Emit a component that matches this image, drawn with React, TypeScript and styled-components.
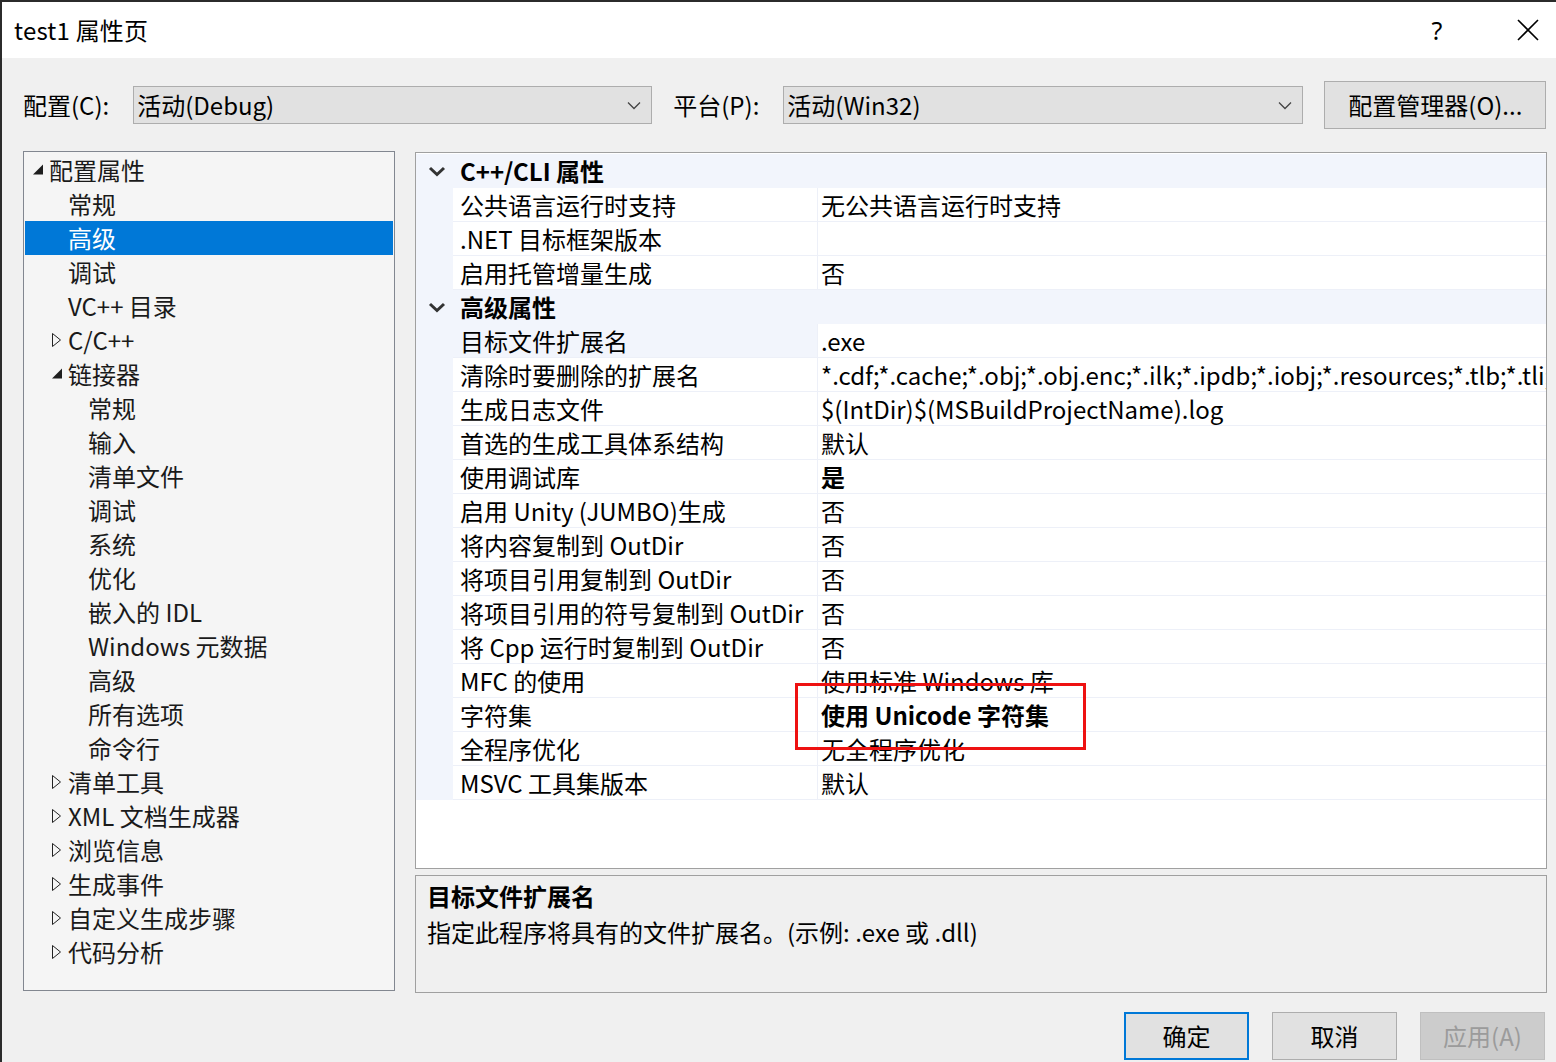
import React from 'react';
import styled, { createGlobalStyle } from 'styled-components';

const GlobalStyle = createGlobalStyle`
  html, body {
    margin: 0;
    padding: 0;
    background: #f0f0f0;
  }
  body {
    font-family: "Noto Sans CJK SC", "Noto Sans", sans-serif;
    color: #000;
  }
  * { box-sizing: border-box; }
`;

const Window = styled.div`
  width: 1556px;
  height: 1062px;
  border-top: 2px solid #2b2b2b;
  border-left: 2px solid #2b2b2b;
  background: #f0f0f0;
  overflow: hidden;
  display: flex;
  flex-direction: column;
  font-size: 24px;
`;

const TitleBar = styled.div`
  height: 56px;
  background: #fff;
  display: flex;
  align-items: center;
  padding-left: 12px;
  padding-right: 5px;
`;

const TitleText = styled.div`
  flex: 1;
  font-size: 24px;
  line-height: 56px;
  letter-spacing: 0.2px;
`;

const TitleButtons = styled.div`
  display: flex;
  gap: 45px;
`;

const TitleButton = styled.div`
  width: 46px;
  height: 56px;
  display: flex;
  align-items: center;
  justify-content: center;
  font-family: "Noto Sans", sans-serif;
  font-size: 25px;
`;

const ConfigRow = styled.div`
  margin-top: 23px;
  height: 48px;
  display: flex;
  align-items: center;
  padding-left: 21px;
`;

const Label = styled.span`
  margin-right: 24px;
  line-height: 34px;
`;

const Combo = styled.div<{ $width: number }>`
  width: ${(p) => p.$width}px;
  height: 38px;
  margin-right: 21px;
  border: 1px solid #adadad;
  background: #e1e1e1;
  display: flex;
  align-items: center;
  padding-left: 3px;
  padding-right: 10px;
`;

const ComboText = styled.span`
  flex: 1;
  line-height: 34px;
`;

const Button = styled.div<{ $primary?: boolean; $disabled?: boolean; $width?: number }>`
  width: ${(p) => p.$width ?? 125}px;
  height: 48px;
  display: flex;
  align-items: center;
  justify-content: center;
  background: ${(p) => (p.$disabled ? '#cccccc' : '#e1e1e1')};
  color: ${(p) => (p.$disabled ? '#9b9b9b' : '#000')};
  border: ${(p) => (p.$primary ? '2px solid #0078d7' : p.$disabled ? '1px solid #bfbfbf' : '1px solid #adadad')};
  line-height: 34px;
`;

const Main = styled.div`
  margin-top: 22px;
  height: 842px;
  display: flex;
  gap: 20px;
  padding-left: 21px;
  padding-right: 9px;
`;

const Tree = styled.div`
  width: 372px;
  height: 840px;
  border: 1px solid #828790;
  background: #f5f5f5;
  padding-top: 1px;
  padding-left: 1px;
  padding-right: 1px;
`;

const TreeRow = styled.div<{ $indent: number; $selected?: boolean }>`
  height: 34px;
  display: flex;
  align-items: center;
  padding-left: ${(p) => p.$indent}px;
  background: ${(p) => (p.$selected ? '#0078d7' : 'transparent')};
  color: ${(p) => (p.$selected ? '#fff' : '#1a1a1a')};
  line-height: 34px;
  white-space: nowrap;
`;

const Expander = styled.span`
  width: 19px;
  height: 34px;
  display: flex;
  align-items: center;
  flex-shrink: 0;
`;

const RightColumn = styled.div`
  flex: 1;
  display: flex;
  flex-direction: column;
  gap: 6px;
  padding-top: 1px;
  min-width: 0;
`;

const Grid = styled.div`
  position: relative;
  height: 717px;
  border: 1px solid #a0a0a0;
  background: #fff;
  padding-top: 1px;
  overflow: hidden;
`;

const CategoryRow = styled.div`
  height: 34px;
  display: grid;
  grid-template-columns: 37px 1fr;
  background: #f2f5fc;
  font-weight: bold;
  line-height: 34px;
`;

const PropRow = styled.div`
  height: 34px;
  display: grid;
  grid-template-columns: 37px 365px 1fr;
  line-height: 33px;
`;

const Gutter = styled.div`
  background: #f2f5fc;
  display: flex;
  align-items: center;
  justify-content: center;
  padding-left: 4px;
`;

const CatLabel = styled.div`
  padding-left: 7px;
  white-space: nowrap;
`;

const NameCell = styled.div<{ $selected?: boolean }>`
  padding-left: 7px;
  border-bottom: 1px solid #edf0f8;
  border-right: 1px solid #edf0f8;
  background: ${(p) => (p.$selected ? '#f2f5fc' : '#fff')};
  white-space: nowrap;
  overflow: hidden;
`;

const ValueCell = styled.div<{ $bold?: boolean }>`
  padding-left: 3px;
  border-bottom: 1px solid #edf0f8;
  font-weight: ${(p) => (p.$bold ? 'bold' : 'normal')};
  white-space: nowrap;
  overflow: hidden;
`;

const Highlight = styled.div`
  position: absolute;
  left: 379px;
  top: 530px;
  width: 291px;
  height: 67px;
  border: 3px solid #ee1111;
  pointer-events: none;
`;

const Description = styled.div`
  flex: 1;
  border: 1px solid #a0a0a0;
  background: #f0f0f0;
  padding: 2px 11px;
  line-height: 36px;
`;

const DescTitle = styled.div`
  font-weight: bold;
`;

const ButtonRow = styled.div`
  margin-top: 19px;
  display: flex;
  justify-content: flex-end;
  gap: 23px;
  padding-right: 11px;
`;

const FilledTri = () => (
  <svg width="19" height="16" viewBox="0 0 19 16">
    <polygon points="13,2.5 13,12.5 3,12.5" fill="#1e1e1e" />
  </svg>
);

const HollowTri = () => (
  <svg width="19" height="16" viewBox="0 0 19 16">
    <polygon points="3.5,1.5 11.5,8 3.5,14.5" fill="none" stroke="#222" strokeWidth="1" />
  </svg>
);

const Chevron = () => (
  <svg width="18" height="11" viewBox="0 0 18 11">
    <polyline points="2,2 9,8.5 16,2" fill="none" stroke="#333" strokeWidth="3" />
  </svg>
);

const ComboArrow = () => (
  <svg width="14" height="9" viewBox="0 0 14 9">
    <polyline points="1,1.5 7,7.5 13,1.5" fill="none" stroke="#444" strokeWidth="1.3" />
  </svg>
);

const CloseIcon = () => (
  <svg width="22" height="22" viewBox="0 0 22 22">
    <path d="M1 1 L21 21 M21 1 L1 21" stroke="#000" strokeWidth="1.6" />
  </svg>
);

type TreeItem = { label: string; level: number; exp?: 'open' | 'closed'; selected?: boolean };

const textX = [49, 68, 88];

const treeItems: TreeItem[] = [
  { label: '配置属性', level: 0, exp: 'open' },
  { label: '常规', level: 1 },
  { label: '高级', level: 1, selected: true },
  { label: '调试', level: 1 },
  { label: 'VC++ 目录', level: 1 },
  { label: 'C/C++', level: 1, exp: 'closed' },
  { label: '链接器', level: 1, exp: 'open' },
  { label: '常规', level: 2 },
  { label: '输入', level: 2 },
  { label: '清单文件', level: 2 },
  { label: '调试', level: 2 },
  { label: '系统', level: 2 },
  { label: '优化', level: 2 },
  { label: '嵌入的 IDL', level: 2 },
  { label: 'Windows 元数据', level: 2 },
  { label: '高级', level: 2 },
  { label: '所有选项', level: 2 },
  { label: '命令行', level: 2 },
  { label: '清单工具', level: 1, exp: 'closed' },
  { label: 'XML 文档生成器', level: 1, exp: 'closed' },
  { label: '浏览信息', level: 1, exp: 'closed' },
  { label: '生成事件', level: 1, exp: 'closed' },
  { label: '自定义生成步骤', level: 1, exp: 'closed' },
  { label: '代码分析', level: 1, exp: 'closed' },
];

type GridItem =
  | { kind: 'cat'; label: string }
  | { kind: 'prop'; name: string; value: string; bold?: boolean; selected?: boolean };

const gridItems: GridItem[] = [
  { kind: 'cat', label: 'C++/CLI 属性' },
  { kind: 'prop', name: '公共语言运行时支持', value: '无公共语言运行时支持' },
  { kind: 'prop', name: '.NET 目标框架版本', value: '' },
  { kind: 'prop', name: '启用托管增量生成', value: '否' },
  { kind: 'cat', label: '高级属性' },
  { kind: 'prop', name: '目标文件扩展名', value: '.exe', selected: true },
  {
    kind: 'prop',
    name: '清除时要删除的扩展名',
    value: '*.cdf;*.cache;*.obj;*.obj.enc;*.ilk;*.ipdb;*.iobj;*.resources;*.tlb;*.tli;*.tlh;*.tmp;*.rsp;*.pgc;*.pgd;*.meta;*.tlog',
  },
  { kind: 'prop', name: '生成日志文件', value: '$(IntDir)$(MSBuildProjectName).log' },
  { kind: 'prop', name: '首选的生成工具体系结构', value: '默认' },
  { kind: 'prop', name: '使用调试库', value: '是', bold: true },
  { kind: 'prop', name: '启用 Unity (JUMBO)生成', value: '否' },
  { kind: 'prop', name: '将内容复制到 OutDir', value: '否' },
  { kind: 'prop', name: '将项目引用复制到 OutDir', value: '否' },
  { kind: 'prop', name: '将项目引用的符号复制到 OutDir', value: '否' },
  { kind: 'prop', name: '将 Cpp 运行时复制到 OutDir', value: '否' },
  { kind: 'prop', name: 'MFC 的使用', value: '使用标准 Windows 库' },
  { kind: 'prop', name: '字符集', value: '使用 Unicode 字符集', bold: true },
  { kind: 'prop', name: '全程序优化', value: '无全程序优化' },
  { kind: 'prop', name: 'MSVC 工具集版本', value: '默认' },
];

const App = () => {
  return (
    <>
      <GlobalStyle />
      <Window>
        <TitleBar>
          <TitleText>test1 属性页</TitleText>
          <TitleButtons>
            <TitleButton>?</TitleButton>
            <TitleButton>
              <CloseIcon />
            </TitleButton>
          </TitleButtons>
        </TitleBar>

        <ConfigRow>
          <Label>配置(C):</Label>
          <Combo $width={519}>
            <ComboText>活动(Debug)</ComboText>
            <ComboArrow />
          </Combo>
          <Label>平台(P):</Label>
          <Combo $width={520}>
            <ComboText>活动(Win32)</ComboText>
            <ComboArrow />
          </Combo>
          <Button $width={222}>配置管理器(O)...</Button>
        </ConfigRow>

        <Main>
          <Tree>
            {treeItems.map((item, i) => (
              <TreeRow key={i} $indent={textX[item.level] - 25 - 19} $selected={item.selected}>
                <Expander>
                  {item.exp === 'open' && <FilledTri />}
                  {item.exp === 'closed' && <HollowTri />}
                </Expander>
                {item.label}
              </TreeRow>
            ))}
          </Tree>

          <RightColumn>
            <Grid>
              {gridItems.map((item, i) =>
                item.kind === 'cat' ? (
                  <CategoryRow key={i}>
                    <Gutter>
                      <Chevron />
                    </Gutter>
                    <CatLabel>{item.label}</CatLabel>
                  </CategoryRow>
                ) : (
                  <PropRow key={i}>
                    <Gutter />
                    <NameCell $selected={item.selected}>{item.name}</NameCell>
                    <ValueCell $bold={item.bold}>{item.value}</ValueCell>
                  </PropRow>
                )
              )}
              <Highlight />
            </Grid>
            <Description>
              <DescTitle>目标文件扩展名</DescTitle>
              <div>指定此程序将具有的文件扩展名。(示例: .exe 或 .dll)</div>
            </Description>
          </RightColumn>
        </Main>

        <ButtonRow>
          <Button $primary>确定</Button>
          <Button>取消</Button>
          <Button $disabled>应用(A)</Button>
        </ButtonRow>
      </Window>
    </>
  );
};

export default App;
